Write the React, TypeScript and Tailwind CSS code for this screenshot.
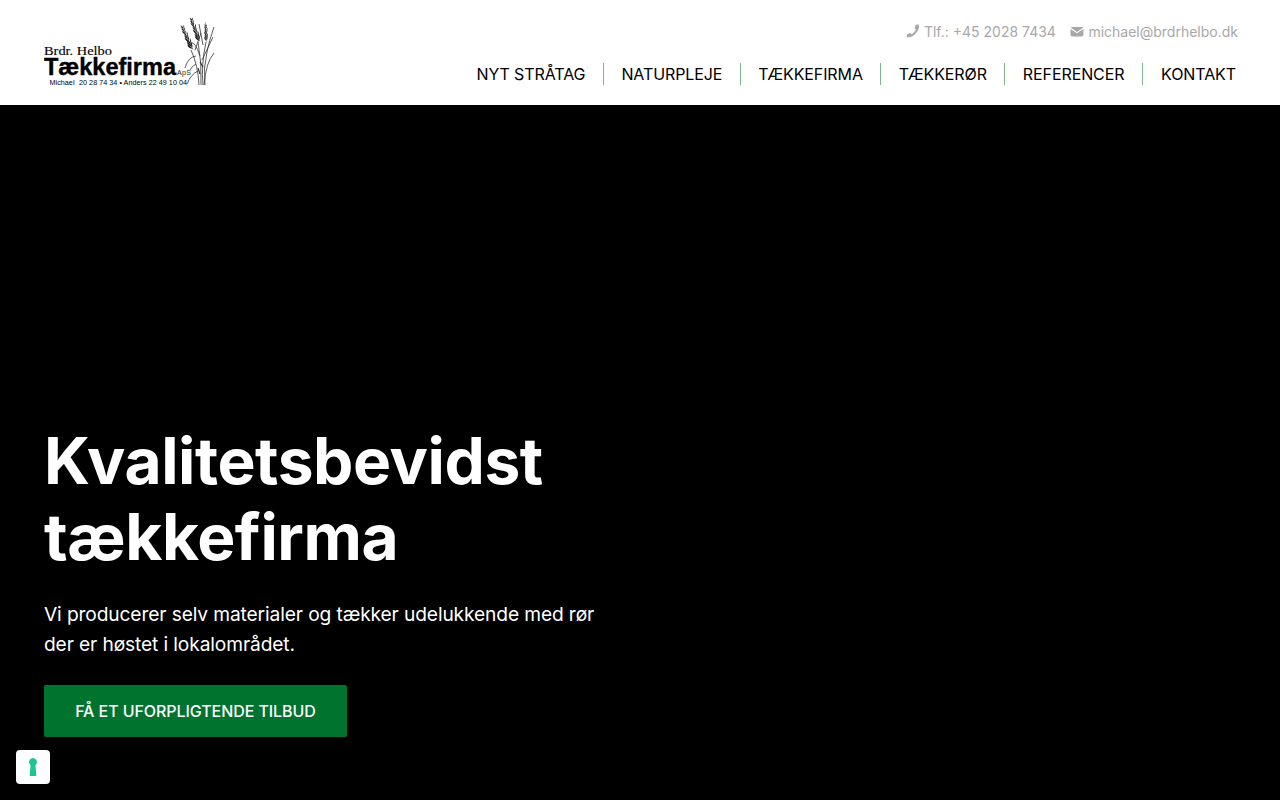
const navItems = ['NYT STRÅTAG', 'NATURPLEJE', 'TÆKKEFIRMA', 'TÆKKERØR', 'REFERENCER', 'KONTAKT'];

function SeedHead({ x, y, angle, rows, size }: { x: number; y: number; angle: number; rows: number; size: number }) {
  return (
    <g transform={`translate(${x} ${y}) rotate(${angle}) scale(${size})`} stroke="#222" strokeWidth=".6" fill="#1a1a1a">
      <path d="M1 14Q0 2-1-14" fill="none" />
      {Array.from({ length: rows }, (_, i) => (
        <path
          key={i}
          stroke="none"
          transform={`translate(${(i % 3) * 0.5 - i * 0.1} ${12 - i * 2.8}) scale(${1.05 - i * 0.04})`}
          d="M.3 1Q-2.800-1-2.400-4.800Q.4-3 .3 1ZM.7 0Q.2-3 2-4.600Q2.600-1 .7 0Z"
        />
      ))}
    </g>
  );
}

const seedHeads = [
  { x: 187, y: 37.5, angle: -22, rows: 9, size: 0.95 },
  { x: 195, y: 29.5, angle: -18, rows: 9, size: 0.9 },
  { x: 206, y: 32, angle: 0, rows: 8, size: 0.7 },
];

function Logo() {
  return (
    <svg className="h-[70px] w-[172px]" viewBox="44 16 172 70" role="img" aria-label="Brdr. Helbo Tækkefirma ApS">
      <g fill="none" stroke="#333" strokeWidth=".8">
        <path d="M191 50Q198 65 199 85M198 42Q202 63 201 85M206 42Q201 65 203 85M214 27Q209 41 207 52Q203 68 205 85" />
        <path d="M214 53Q206 62 204 85M195 50L201 33M202 60L213 37" />
        <path d="M196 56Q188 57 185 68M196 64Q192 66 190 70M198 71Q191 74 187 84M203 45L199 24M200 56Q195 41 191 43" />
        <path d="M198 68l2 6M200 62l3 5" strokeWidth="1.2" />
      </g>
      {seedHeads.map((head) => <SeedHead key={head.x} {...head} />)}
      <text x="44" y="55.300" fontFamily="Liberation Serif, serif" fontSize="13.200" stroke="#111" strokeWidth=".15" textLength="68" lengthAdjust="spacingAndGlyphs">Brdr. Helbo</text>
      <text x="44" y="75" fontFamily="Liberation Sans, sans-serif" fontWeight="700" fontSize="24.600" textLength="132" lengthAdjust="spacingAndGlyphs" stroke="#000" strokeWidth=".4">Tækkefirma</text>
      <text x="177" y="75" fontFamily="Liberation Sans, sans-serif" fontSize="7" fill="#222" textLength="14">ApS</text>
      <text x="49.500" y="85" fontFamily="Liberation Sans, sans-serif" fontSize="7.200" textLength="25">Michael</text>
      <text x="79" y="85" fontFamily="Liberation Sans, sans-serif" fontSize="7.200" textLength="108">20 28 74 34 • Anders 22 49 10 04</text>
    </svg>
  );
}

function PhoneIcon() {
  return (
    <svg className="size-[14px]" viewBox="0 0 14 14" fill="currentColor" aria-hidden="true">
      <path d="M9.600 1Q11.200.2 13 .7Q13.700 5.300 9.700 9.400Q5.800 13.500 1.300 13.300Q.5 11.800.8 10.300L4.400 8.900L5.700 10.200Q8.700 8.700 10 5.600L8.700 4.500Z" />
    </svg>
  );
}

function MailIcon() {
  return (
    <svg className="size-[14px]" viewBox="0 0 14 14" fill="currentColor" aria-hidden="true">
      <path d="M2.200 2h9.600q1 0 1.400.8L7 7 .8 2.800Q1.200 2 2.200 2Z" />
      <path d="M.5 4.100L7 8.300l6.500-4.200v5.700q0 1.700-1.700 1.700H2.200Q.5 11.500.5 9.800Z" />
    </svg>
  );
}

export default function App() {
  return (
    <div className="flex h-screen flex-col overflow-hidden bg-black font-['Inter',sans-serif]">
      <header className="flex h-[105px] shrink-0 items-start justify-between bg-white pr-[42px] pl-11">
        <a className="mt-4 block" href="#"><Logo /></a>
        <div className="flex flex-col items-end pt-5">
          <div className="flex h-[22px] items-center gap-[14.500px] text-[14px] text-[#a8a8a8]">
            <a className="flex items-center gap-1" href="tel:+4520287434"><PhoneIcon />Tlf.: +45 2028 7434</a>
            <a className="flex items-center gap-1" href="mailto:michael@brdrhelbo.dk"><span className="pt-px"><MailIcon /></span>michael@brdrhelbo.dk</a>
          </div>
          <nav className="mt-[21px] mr-[2px] flex h-[22px] text-[16px] leading-[22px] tracking-[-0.1px] text-black">
            {navItems.map((item) => (
              <a key={item} className="border-r border-[#7fb591] px-[17.500px] last:border-r-0 last:pr-0 last:pl-[18.200px]" href="#">{item}</a>
            ))}
          </nav>
        </div>
      </header>
      <main className="flex flex-1 flex-col items-start justify-end px-11 pb-[63px] text-white">
        <h1 className="w-[560px] text-[64px] leading-[76px] font-bold tracking-[-0.0065em]">Kvalitetsbevidst tækkefirma</h1>
        <p className="mt-6 w-[570px] text-[19.200px] leading-[30px] tracking-[-0.0065em]">Vi producerer selv materialer og tækker udelukkende med rør der er høstet i lokalområdet.</p>
        <a className="mt-[26px] flex h-[52px] w-[303px] items-center justify-center rounded-[2px] bg-[#00732e] text-base font-medium tracking-[-0.070px]" href="#">FÅ ET UFORPLIGTENDE TILBUD</a>
      </main>
      <button className="fixed bottom-4 left-4 flex size-[34px] items-center justify-center rounded-[4px] bg-white" aria-label="Privatliv">
        <svg className="h-[18px] w-2" viewBox="0 0 8 18" fill="#1cc691" aria-hidden="true">
          <path d="M4 0a4 4 0 0 1 2.500 7.100L7.300 18H.7L1.500 7.100A4 4 0 0 1 4 0Z" />
        </svg>
      </button>
    </div>
  );
}
